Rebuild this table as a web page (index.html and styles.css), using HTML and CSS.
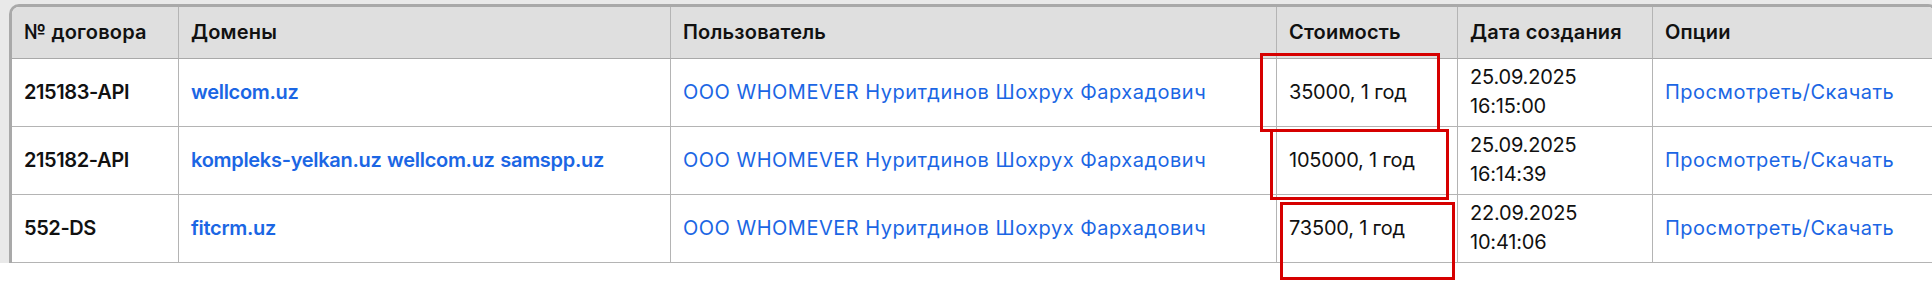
FILE: index.html
```html
<!DOCTYPE html>
<html lang="ru">
<head>
<meta charset="utf-8">
<link rel="stylesheet" href="styles.css">
</head>
<body>
<div class="frame">
  <div class="table-wrap">
    <table class="contracts">
      <colgroup>
        <col class="c1"><col class="c2"><col class="c3"><col class="c4"><col class="c5"><col class="c6">
      </colgroup>
      <thead>
        <tr>
          <th>№ договора</th>
          <th>Домены</th>
          <th>Пользователь</th>
          <th>Стоимость</th>
          <th>Дата создания</th>
          <th>Опции</th>
        </tr>
      </thead>
      <tbody>
        <tr>
          <td class="num">215183-API</td>
          <td><a class="domain" href="#">wellcom.uz</a></td>
          <td><a class="user" href="#">ООО WHOMEVER Нуритдинов Шохрух Фархадович</a></td>
          <td class="cost">35000, 1 год</td>
          <td class="date">25.09.2025<br>16:15:00</td>
          <td><a class="user" href="#">Просмотреть/Скачать</a></td>
        </tr>
        <tr>
          <td class="num">215182-API</td>
          <td><a class="domain" href="#">kompleks-yelkan.uz</a> <a class="domain" href="#">wellcom.uz</a> <a class="domain" href="#">samspp.uz</a></td>
          <td><a class="user" href="#">ООО WHOMEVER Нуритдинов Шохрух Фархадович</a></td>
          <td class="cost">105000, 1 год</td>
          <td class="date">25.09.2025<br>16:14:39</td>
          <td><a class="user" href="#">Просмотреть/Скачать</a></td>
        </tr>
        <tr>
          <td class="num">552-DS</td>
          <td><a class="domain" href="#">fitcrm.uz</a></td>
          <td><a class="user" href="#">ООО WHOMEVER Нуритдинов Шохрух Фархадович</a></td>
          <td class="cost">73500, 1 год</td>
          <td class="date">22.09.2025<br>10:41:06</td>
          <td><a class="user" href="#">Просмотреть/Скачать</a></td>
        </tr>
      </tbody>
    </table>
  </div>
</div>
<div class="mark mark-1"></div>
<div class="mark mark-2"></div>
<div class="mark mark-3"></div>
</body>
</html>
```

FILE: styles.css
```css
html, body {
  margin: 0;
  padding: 0;
  background: #ffffff;
}
body {
  font-family: Inter, Roboto, "Liberation Sans", Arial, sans-serif;
  font-size: 20px;
  color: #111111;
  position: relative;
  width: 1932px;
  height: 282px;
  overflow: hidden;
}
.frame {
  height: 263px;
  background: #e9e9e9;
  padding: 4px 0 0 9px;
  box-sizing: border-box;
  overflow: hidden;
}
.table-wrap {
  width: 1923px;
  border: 3px solid #a9a9a9;
  border-bottom: none;
  border-radius: 10px 10px 0 0;
  overflow: hidden;
  background: #ffffff;
}
.contracts {
  width: 100%;
  table-layout: fixed;
  border-collapse: separate;
  border-spacing: 0;
}
.c1 { width: 167px; }
.c2 { width: 492px; }
.c3 { width: 606px; }
.c4 { width: 181px; }
.c5 { width: 195px; }
.c6 { width: auto; }
.contracts th,
.contracts td {
  text-align: left;
  vertical-align: middle;
  line-height: 29px;
  white-space: nowrap;
  border-right: 1px solid #b4b4b4;
  border-bottom: 1px solid #b4b4b4;
  padding-left: 12px;
  padding-right: 10px;
}
.contracts th:last-child,
.contracts td:last-child {
  border-right: none;
}
.contracts th {
  background: #dfdfdf;
  font-weight: 600;
  height: 29px;
  padding-top: 11px;
  padding-bottom: 11px;
  border-bottom-color: #a9a9a9;
  letter-spacing: 0.2px;
}
.contracts td {
  height: 58px;
  padding-top: 4px;
  padding-bottom: 5px;
}
.contracts td.num {
  font-weight: 600;
  letter-spacing: -0.4px;
}
.contracts td.cost,
.contracts td.date {
  letter-spacing: -0.2px;
}
a {
  text-decoration: none;
  color: #1b66e4;
}
a.user {
  letter-spacing: 0.5px;
}
a.domain {
  font-weight: 600;
  letter-spacing: -0.3px;
}
.mark {
  position: absolute;
  border: 3px solid #d60000;
  box-sizing: border-box;
}
.mark-1 { left: 1260px; top: 53px; width: 180px; height: 79px; }
.mark-2 { left: 1270px; top: 129px; width: 179px; height: 71px; }
.mark-3 { left: 1280px; top: 202px; width: 175px; height: 78px; }
```
